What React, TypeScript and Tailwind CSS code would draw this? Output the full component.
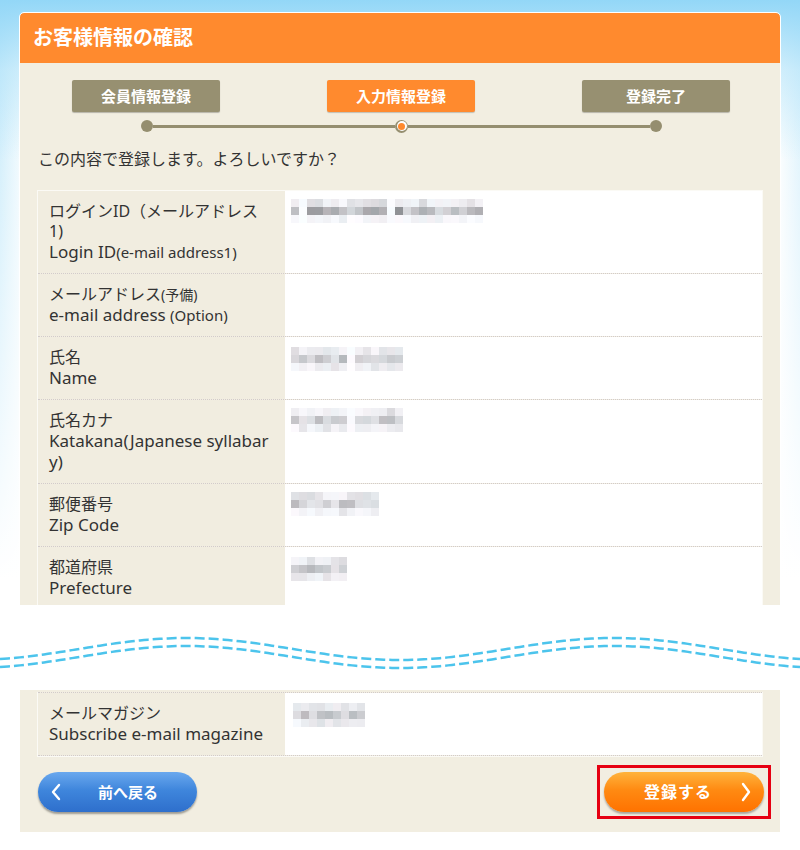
import React from "react";

function makeRand(seed: number) {
  let s = seed;
  return () => {
    s = (s * 9301 + 49297) % 233280;
    return s / 233280;
  };
}

function Mosaic({ cols, seed, dark = false, gaps = [] }: { cols: number; seed: number; dark?: boolean; gaps?: number[] }) {
  const r = makeRand(seed);
  const rows = 3;
  const cells: string[] = [];
  for (let y = 0; y < rows; y++) {
    for (let x = 0; x < cols; x++) {
      let v: number;
      if (gaps.includes(x)) v = 250 + Math.floor(r() * 5);
      else if (y === 1) v = dark ? 140 + Math.floor(r() * 80) : 185 + Math.floor(r() * 45);
      else if (y === 0) v = dark ? 215 + Math.floor(r() * 35) : 218 + Math.floor(r() * 30);
      else v = dark ? 238 + Math.floor(r() * 16) : 226 + Math.floor(r() * 24);
      const t = Math.floor(r() * 8) - 4;
      cells.push(`rgb(${Math.min(255, v + t)},${Math.min(255, v)},${Math.min(255, v + 4)})`);
    }
  }
  return (
    <div className="grid" style={{ gridTemplateColumns: `repeat(${cols}, 8px)`, gridAutoRows: "8px" }}>
      {cells.map((c, i) => (
        <div key={i} style={{ background: c }} />
      ))}
    </div>
  );
}

function Row({ ja, en, value, top = false }: { ja: React.ReactNode; en: React.ReactNode; value?: React.ReactNode; top?: boolean }) {
  return (
    <div className={`flex border-b border-dotted border-[#d2cbcb] ${top ? "border-t" : ""}`}>
      <div className="w-[247px] shrink-0 bg-[#f1ede0] pl-[11px] pr-[14px] pt-[10px] pb-[11px] text-[#333] break-all">
        <div className="text-[16px] leading-[20px]">{ja}</div>
        <div className="text-[17px] leading-[21px]">{en}</div>
      </div>
      <div className="flex-1 bg-white pl-[6px] pt-[8px]">{value}</div>
    </div>
  );
}

function Wave() {
  const pts = (off: number) => {
    const p: string[] = [];
    for (let x = 0; x <= 800; x += 4) {
      const y = 44 + off - 11 * Math.cos((2 * Math.PI * (x - 186)) / 428);
      p.push(`${x === 0 ? "M" : "L"}${x},${y.toFixed(2)}`);
    }
    return p.join(" ");
  };
  return (
    <svg width="800" height="85" viewBox="0 0 800 85" className="block">
      <path d={pts(0)} fill="none" stroke="#4cc4ec" strokeWidth="2.5" strokeDasharray="10 4" />
      <path d={pts(8)} fill="none" stroke="#4cc4ec" strokeWidth="2.5" strokeDasharray="10 4" />
    </svg>
  );
}

export default function App() {
  return (
    <div className="w-[800px] h-[850px] overflow-hidden font-['Noto_Sans','Noto_Sans_CJK_JP',sans-serif] text-[#333] bg-[linear-gradient(to_bottom,#93d7f7_0px,rgba(180,228,250,0.6)_70px,rgba(255,255,255,0)_160px),linear-gradient(to_bottom,rgba(255,255,255,0)_0px,#ffffff_580px),linear-gradient(to_right,#c6eafa_0px,#e9f7fd_18px,#ffffff_22px,#ffffff_776px,#d9f1fc_800px)]">
      <div className="pt-[13px]">
        {/* top card */}
        <div className="mx-[20px] w-[760px] rounded-t-[4px] outline outline-1 outline-white">
          <div className="h-[50px] rounded-t-[4px] bg-[#ff8a2e] flex items-center pl-[13px]">
            <h1 className="text-white text-[20px] font-bold">お客様情報の確認</h1>
          </div>
          <div className="h-[542px] overflow-hidden bg-[#f2eee1] px-[17px] pt-[17px]">
            <div className="flex pl-[35px] gap-[107px]">
              <div className="w-[148px] h-[32px] rounded-[2px] bg-[#979071] shadow-[0_1px_1px_rgba(0,0,0,0.25)] flex items-center justify-center text-white text-[15px] font-bold">会員情報登録</div>
              <div className="w-[148px] h-[32px] rounded-[2px] bg-[#ff8a2e] shadow-[0_1px_1px_rgba(0,0,0,0.2)] flex items-center justify-center text-white text-[15px] font-bold">入力情報登録</div>
              <div className="w-[148px] h-[32px] rounded-[2px] bg-[#979071] shadow-[0_1px_1px_rgba(0,0,0,0.25)] flex items-center justify-center text-white text-[15px] font-bold">登録完了</div>
            </div>
            <div className="mt-[7px] ml-[104px] w-[521px] h-[14px] flex items-center">
              <div className="w-[12px] h-[12px] rounded-full bg-[#958e6f]" />
              <div className="flex-1 h-[3px] bg-[#958e6f]" />
              <div className="w-[13px] h-[13px] rounded-full bg-[#958e6f] flex items-center justify-center">
                <div className="w-[10px] h-[10px] rounded-full bg-white flex items-center justify-center">
                  <div className="w-[7px] h-[7px] rounded-full bg-[#ff8a2e]" />
                </div>
              </div>
              <div className="flex-1 h-[3px] bg-[#958e6f]" />
              <div className="w-[12px] h-[12px] rounded-full bg-[#958e6f]" />
            </div>
            <p className="mt-[14px] pl-[1px] text-[16px] leading-[24px] text-[#333]">この内容で登録します。よろしいですか？</p>
            <div className="mt-[19px] border-t border-l border-r border-[#fbfaf5]">
              <Row
                ja="ログインID（メールアドレス1)"
                en={<><span>Login ID</span><span className="text-[15px] leading-[1]">(e-mail address1)</span></>}
                value={<Mosaic cols={24} seed={11} dark gaps={[1, 12]} />}
              />
              <Row
                ja={<><span>メールアドレス</span><span className="text-[14px] leading-[1]">(予備)</span></>}
                en={<><span>e-mail address </span><span className="text-[15px] leading-[1]">(Option)</span></>}
              />
              <Row ja="氏名" en="Name" value={<div className="pt-[2px]"><Mosaic cols={14} seed={23} gaps={[7]} /></div>} />
              <Row ja="氏名カナ" en="Katakana(Japanese syllabary)" value={<Mosaic cols={14} seed={37} gaps={[7]} />} />
              <Row ja="郵便番号" en="Zip Code" value={<Mosaic cols={11} seed={51} />} />
              <Row ja="都道府県" en="Prefecture" value={<div className="pt-[2px]"><Mosaic cols={7} seed={67} /></div>} />
            </div>
          </div>
        </div>

        {/* wave break */}
        <Wave />

        {/* bottom card */}
        <div className="mx-[20px] w-[760px] bg-[#f2eee1] pt-[2px] px-[17px]">
          <div className="border-l border-r border-b border-[#fbfaf5]">
            <Row top ja="メールマガジン" en="Subscribe e-mail magazine" value={<div className="pl-[2px] pt-[2px]"><Mosaic cols={9} seed={83} /></div>} />
          </div>
          <div className="flex items-center justify-between pt-[8px] pb-[13px] mr-[-8px]">
            <button className="ml-[1px] w-[159px] h-[40px] rounded-full bg-[linear-gradient(to_bottom,#6aa8ee_0%,#3f86dc_45%,#2e6fcc_100%)] shadow-[0_2px_2px_rgba(0,0,0,0.35)] flex items-center text-white">
              <svg width="12" height="18" viewBox="0 0 12 18" className="ml-[12px]">
                <polyline points="9,2 3,9 9,16" fill="none" stroke="white" strokeWidth="2.4" strokeLinecap="round" strokeLinejoin="round" />
              </svg>
              <span className="ml-[36px] text-[15px] font-bold">前へ戻る</span>
            </button>
            <div className="border-[3px] border-[#e60012] px-[4px] py-[4px]">
              <button className="w-[160px] h-[40px] rounded-full bg-[linear-gradient(to_bottom,#ffb33c_0%,#ff8a12_45%,#ff7200_100%)] shadow-[0_2px_2px_rgba(0,0,0,0.3)] flex items-center text-white">
                <span className="ml-[40px] text-[16px] font-bold tracking-[1px]">登録する</span>
                <svg width="12" height="20" viewBox="0 0 12 20" className="ml-[28px]">
                  <polyline points="3,2 9,10 3,18" fill="none" stroke="white" strokeWidth="2.4" strokeLinecap="round" strokeLinejoin="round" />
                </svg>
              </button>
            </div>
          </div>
        </div>
      </div>
    </div>
  );
}
